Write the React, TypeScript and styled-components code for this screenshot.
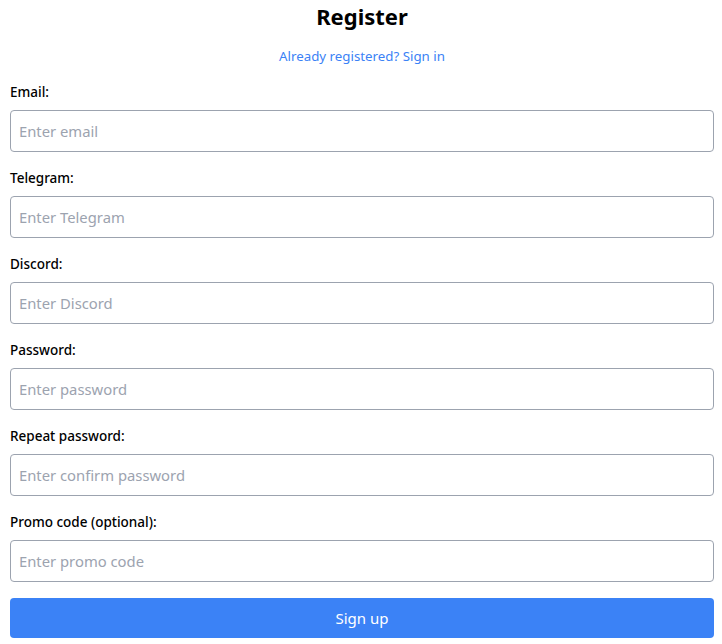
import { createGlobalStyle, styled } from "styled-components";

const GlobalStyle = createGlobalStyle`
  html, body {
    margin: 0;
    padding: 0;
    background: #ffffff;
    font-family: "Noto Sans", "Open Sans", sans-serif;
  }
  * {
    box-sizing: border-box;
  }
`;

const Page = styled.main`
  padding: 0 8px 0 10px;
`;

const Title = styled.h1`
  margin: 0;
  text-align: center;
  font-size: 22px;
  line-height: 32px;
  font-weight: 700;
  color: #000;
`;

const SignInLink = styled.a`
  display: block;
  margin-top: 14px;
  text-align: center;
  font-size: 13.3px;
  line-height: 20px;
  color: #3b82f6;
  text-decoration: none;
`;

const Form = styled.form`
  display: flex;
  flex-direction: column;
  gap: 16px;
  margin-top: 16px;
`;

const Field = styled.div`
  display: flex;
  flex-direction: column;
  gap: 8px;
`;

const Label = styled.label`
  font-size: 13.5px;
  line-height: 20px;
  font-weight: 500;
  color: #000;
`;

const Input = styled.input`
  height: 42px;
  width: 100%;
  padding: 0 8px;
  border: 1px solid #9ca3af;
  border-radius: 4px;
  font-family: inherit;
  font-size: 14.8px;
  color: #111;
  outline: none;

  &::placeholder {
    color: #9ca3af;
  }
`;

const Button = styled.button`
  height: 40px;
  width: 100%;
  border: none;
  border-radius: 4px;
  background: #3b82f6;
  color: #fff;
  font-family: inherit;
  font-size: 15px;
  cursor: pointer;
`;

const fields = [
  { id: "email", label: "Email:", placeholder: "Enter email", type: "email" },
  { id: "telegram", label: "Telegram:", placeholder: "Enter Telegram", type: "text" },
  { id: "discord", label: "Discord:", placeholder: "Enter Discord", type: "text" },
  { id: "password", label: "Password:", placeholder: "Enter password", type: "password" },
  { id: "repeat", label: "Repeat password:", placeholder: "Enter confirm password", type: "password" },
  { id: "promo", label: "Promo code (optional):", placeholder: "Enter promo code", type: "text" },
];

function App() {
  return (
    <Page>
      <GlobalStyle />
      <Title>Register</Title>
      <SignInLink href="#">Already registered? Sign in</SignInLink>
      <Form onSubmit={(e) => e.preventDefault()}>
        {fields.map((f) => (
          <Field key={f.id}>
            <Label htmlFor={f.id}>{f.label}</Label>
            <Input id={f.id} type={f.type} placeholder={f.placeholder} />
          </Field>
        ))}
        <Button type="submit">Sign up</Button>
      </Form>
    </Page>
  );
}

export default App;
